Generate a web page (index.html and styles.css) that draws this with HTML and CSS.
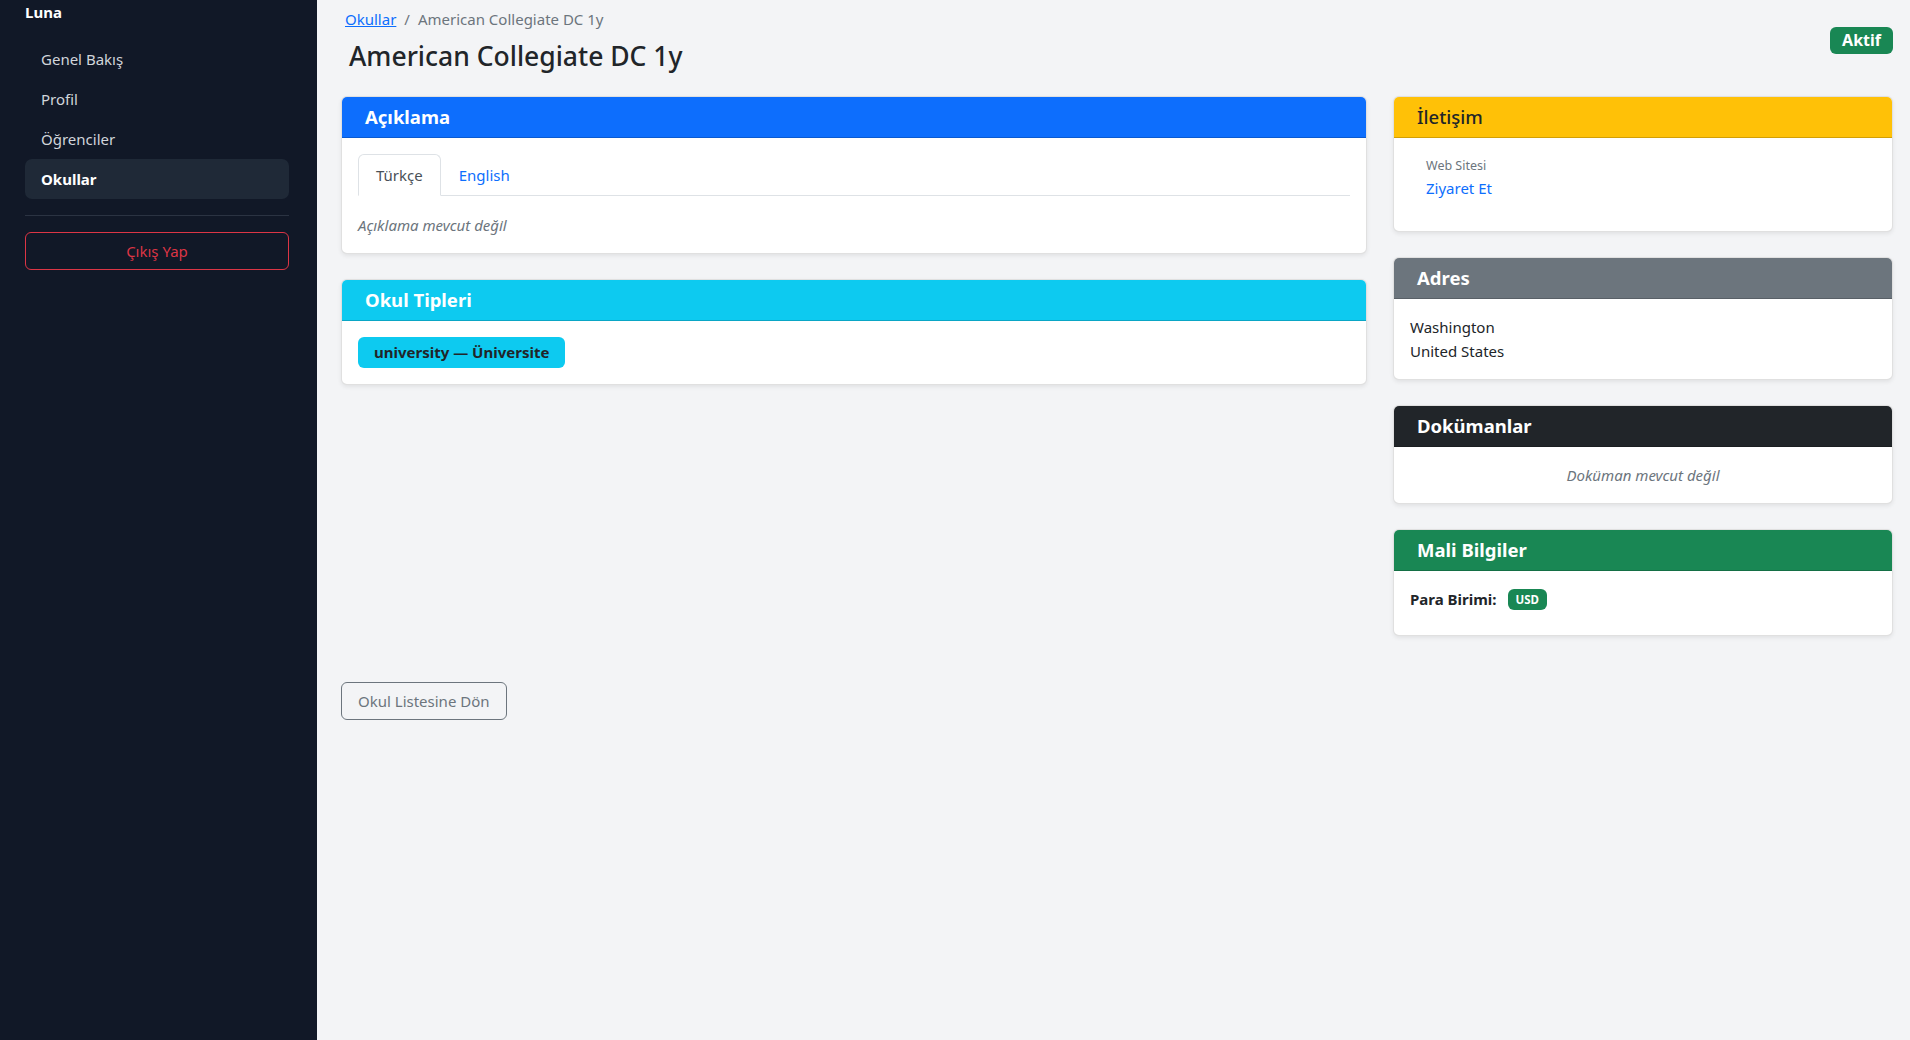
FILE: index.html
```html
<!DOCTYPE html>
<html lang="tr">
<head>
<meta charset="utf-8">
<title>American Collegiate DC 1y</title>
<link rel="stylesheet" href="styles.css">
</head>
<body>
<div class="layout">
  <aside class="sidebar">
    <div class="brand">Luna</div>
    <nav class="nav">
      <a class="nav-item" href="#">Genel Bakış</a>
      <a class="nav-item" href="#">Profil</a>
      <a class="nav-item" href="#">Öğrenciler</a>
      <a class="nav-item active" href="#">Okullar</a>
    </nav>
    <hr class="divider">
    <button class="logout">Çıkış Yap</button>
  </aside>
  <main class="main">
    <div class="page-head">
      <div class="head-text">
        <div class="breadcrumb"><a href="#">Okullar</a><span class="sep">/</span><span class="crumb">American Collegiate DC 1y</span></div>
        <h1 class="title">American Collegiate DC 1y</h1>
      </div>
      <span class="status">Aktif</span>
    </div>
    <div class="grid">
      <div class="col">
        <section class="card">
          <div class="card-header bg-blue">Açıklama</div>
          <div class="card-body">
            <div class="tabs">
              <span class="tab active">Türkçe</span>
              <span class="tab">English</span>
            </div>
            <p class="muted-italic">Açıklama mevcut değil</p>
          </div>
        </section>
        <section class="card">
          <div class="card-header bg-cyan">Okul Tipleri</div>
          <div class="card-body">
            <span class="type-badge">university — Üniversite</span>
          </div>
        </section>
      </div>
      <div class="col">
        <section class="card">
          <div class="card-header bg-yellow">İletişim</div>
          <div class="card-body">
            <div class="contact-item">
              <div class="label">Web Sitesi</div>
              <a class="link" href="#">Ziyaret Et</a>
            </div>
          </div>
        </section>
        <section class="card">
          <div class="card-header bg-gray">Adres</div>
          <div class="card-body">
            <div>Washington</div>
            <div>United States</div>
          </div>
        </section>
        <section class="card">
          <div class="card-header bg-dark">Dokümanlar</div>
          <div class="card-body center">
            <span class="muted-italic">Doküman mevcut değil</span>
          </div>
        </section>
        <section class="card">
          <div class="card-header bg-green">Mali Bilgiler</div>
          <div class="card-body">
            <p class="currency"><strong>Para Birimi:</strong><span class="usd">USD</span></p>
          </div>
        </section>
      </div>
    </div>
    <button class="back-btn">Okul Listesine Dön</button>
  </main>
</div>
</body>
</html>
```
FILE: styles.css
```css
* { box-sizing: border-box; }
html, body { margin: 0; padding: 0; }
body {
  font-family: "Noto Sans", "Open Sans", sans-serif;
  font-size: 15px;
  line-height: 24px;
  color: #212529;
  background: #f3f4f6;
}
.layout { display: flex; min-height: 100vh; }
.sidebar {
  width: 317px;
  flex: none;
  background: #111827;
  padding: 0 28px 0 25px;
}
.brand {
  color: #fff;
  font-weight: 700;
  font-size: 15px;
  line-height: 24px;
  margin-bottom: 15px;
}
.nav { display: flex; flex-direction: column; }
.nav-item {
  display: block;
  height: 40px;
  line-height: 40px;
  padding: 0 16px;
  color: #d1d5db;
  text-decoration: none;
  border-radius: 7px;
}
.nav-item.active { background: #1f2937; color: #fff; font-weight: 700; }
.divider { border: 0; border-top: 1px solid #2b3342; margin: 16px 0 16px; }
.logout {
  width: 100%;
  height: 38px;
  background: transparent;
  border: 1px solid #dc3545;
  color: #dc3545;
  border-radius: 6px;
  font: inherit;
}
.main { flex: 1; padding: 7px 17px 24px 24px; }
.page-head { display: flex; justify-content: space-between; align-items: center; margin-bottom: 22px; }
.breadcrumb { color: #6c757d; font-size: 15px; line-height: 24px; padding-left: 4px; }
.breadcrumb a { color: #0d6efd; text-decoration: underline; }
.sep { padding: 0 8px; color: #6c757d; }
.title { margin: 7px 0 0 8px; font-size: 26.5px; font-weight: 500; line-height: 36px; }
.status {
  background: #198754;
  color: #fff;
  font-weight: 700;
  font-size: 16px;
  line-height: 27px;
  padding: 0 12px;
  border-radius: 6px;
  margin-top: -1px;
}
.grid { display: grid; grid-template-columns: 1026px minmax(0, 1fr); column-gap: 26px; align-items: start; }
.col { display: flex; flex-direction: column; gap: 25px; }
.card {
  background: #fff;
  border: 1px solid rgba(0,0,0,.12);
  border-radius: 6px;
  box-shadow: 0 2px 4px rgba(0,0,0,.075);
  overflow: hidden;
}
.card-header {
  height: 41px;
  padding: 0 23px;
  font-size: 18.5px;
  font-weight: 700;
  line-height: 40px;
  color: #fff;
  border-bottom: 1px solid rgba(0,0,0,.175);
}
.bg-blue { background: #0d6efd; }
.bg-cyan { background: #0dcaf0; }
.bg-yellow { background: #ffc107; color: #212529; font-weight: 500; }
.bg-gray { background: #6c757d; }
.bg-dark { background: #212529; }
.bg-green { background: #198754; }
.card-body { padding: 16px; }
.center { text-align: center; }
.tabs { display: flex; border-bottom: 1px solid #dee2e6; }
.tab {
  padding: 8px 17px;
  line-height: 24px;
  color: #0d6efd;
  border: 1px solid transparent;
  border-radius: 6px 6px 0 0;
  margin-bottom: -1px;
}
.tab.active { color: #495057; border-color: #dee2e6 #dee2e6 #fff; background: #fff; }
.muted-italic { color: #6c757d; font-style: italic; margin: 0; }
.tabs + .muted-italic { margin-top: 17px; }
.type-badge {
  display: inline-block;
  background: #0dcaf0;
  color: #212529;
  font-weight: 700;
  font-size: 15px;
  line-height: 31px;
  padding: 0 16px;
  border-radius: 6px;
}
.contact-item { padding: 2px 16px 15px; }
.label { color: #6c757d; font-size: 12.5px; line-height: 20px; }
.link { color: #0d6efd; text-decoration: none; }
.currency { margin: 0 0 8px; display: flex; align-items: center; }
.usd {
  background: #198754;
  color: #fff;
  font-size: 11.5px;
  font-weight: 700;
  line-height: 21px;
  padding: 0 8px;
  border-radius: 6px;
  margin-left: 11px;
}
.back-btn {
  margin-top: 46px;
  height: 38px;
  padding: 0 16px;
  background: transparent;
  border: 1px solid #6c757d;
  color: #6c757d;
  border-radius: 6px;
  font: inherit;
}
```
